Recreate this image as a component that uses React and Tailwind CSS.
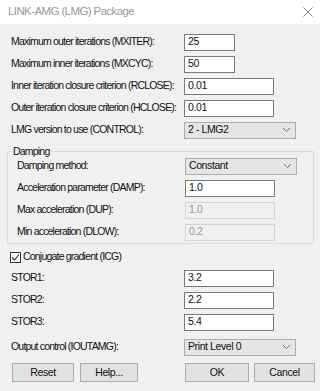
import { useState } from 'react';

const font = { fontFamily: '"Liberation Sans", Arial, sans-serif' };

function Chevron() {
  return (
    <svg width="9" height="6" viewBox="0 0 9 6" className="ml-auto mr-[4px]">
      <path d="M1 1 L4.5 4.5 L8 1" fill="none" stroke="#707070" strokeWidth="1" />
    </svg>
  );
}

function TextBox({ value, width = 'w-[90px]', disabled }) {
  return (
    <div
      className={`h-[17px] ${width} border flex items-center pl-[3px] text-[10.5px] tracking-[-0.4px] ${
        disabled ? 'bg-[#f0f0f0] border-[#d4d4d4] text-[#9a9a9a]' : 'bg-white border-[#7a7a7a] text-[#111]'
      }`}
    >
      {value}
    </div>
  );
}

function Select({ value }) {
  return (
    <div className="h-[17px] w-[112px] bg-[#e5e5e5] border border-[#acacac] flex items-center pl-[3px] text-[10.5px] tracking-[-0.4px] text-[#111]">
      {value}
      <Chevron />
    </div>
  );
}

function Row({ label, children, indent = 'pl-[11px]', h = 'h-[22px]' }) {
  return (
    <div className={`flex items-center ${h}`}>
      <div className={`w-[184px] ${indent} text-[10.5px] tracking-[-0.8px] text-[#111] whitespace-nowrap`}>{label}</div>
      {children}
    </div>
  );
}

function Button({ children, width = 'w-[62px]' }) {
  return (
    <div className={`h-[19px] ${width} bg-[#e1e1e1] border border-[#adadad] flex items-center justify-center text-[10.5px] tracking-[-0.4px] text-[#111]`}>
      {children}
    </div>
  );
}

export default function App() {
  const [icg] = useState(true);

  return (
    <div className="w-[320px] h-[391px] bg-[#f0f0f0] flex flex-col overflow-hidden" style={font}>
      <div className="h-[24px] bg-white flex items-center pl-[8px] pr-[4px] shrink-0">
        <span className="text-[11.5px] tracking-[-0.6px] text-[#999]">LINK-AMG (LMG) Package</span>
        <svg width="10" height="10" viewBox="0 0 10 10" className="ml-auto mr-[3px]">
          <path d="M0.5 0.5 L9.5 9.5 M9.5 0.5 L0.5 9.5" stroke="#8a8a8a" strokeWidth="1" />
        </svg>
      </div>

      <div className="flex flex-col pt-[7px]">
        <Row label="Maximum outer iterations (MXITER):">
          <TextBox value="25" width="w-[51px]" />
        </Row>
        <Row label="Maximum inner iterations (MXCYC):">
          <TextBox value="50" width="w-[51px]" />
        </Row>
        <Row label="Inner iteration closure criterion (RCLOSE):">
          <TextBox value="0.01" />
        </Row>
        <Row label="Outer iteration closure criterion (HCLOSE):">
          <TextBox value="0.01" />
        </Row>
        <Row label="LMG version to use (CONTROL):">
          <Select value="2 - LMG2" />
        </Row>

        <div className="relative mt-[10px] ml-[7px] w-[307px] border border-[#dcdcdc] pt-[3px]">
          <span className="absolute -top-[8px] left-[3px] bg-[#f0f0f0] px-[2px] text-[10.5px] tracking-[-0.8px] text-[#111]">Damping</span>
          <Row label="Damping method:" indent="pl-[9px]">
            <div className="-ml-[7px]">
              <Select value="Constant" />
            </div>
          </Row>
          <Row label="Acceleration parameter (DAMP):" indent="pl-[9px]">
            <div className="-ml-[7px]">
              <TextBox value="1.0" />
            </div>
          </Row>
          <Row label="Max acceleration (DUP):" indent="pl-[9px]">
            <div className="-ml-[7px]">
              <TextBox value="1.0" disabled />
            </div>
          </Row>
          <Row label="Min acceleration (DLOW):" indent="pl-[9px]">
            <div className="-ml-[7px]">
              <TextBox value="0.2" disabled />
            </div>
          </Row>
        </div>

        <div className="flex items-center h-[20px] mt-[3px] pl-[10px]">
          <div className="w-[11px] h-[11px] border border-[#333] bg-white flex items-center justify-center">
            {icg && (
              <svg width="9" height="9" viewBox="0 0 9 9">
                <path d="M1 4.5 L3.5 7 L8 1.5" fill="none" stroke="#222" strokeWidth="1.1" />
              </svg>
            )}
          </div>
          <span className="ml-[2px] text-[10.5px] tracking-[-0.8px] text-[#111]">Conjugate gradient (ICG)</span>
        </div>
        <Row label="STOR1:">
          <TextBox value="3.2" />
        </Row>
        <Row label="STOR2:">
          <TextBox value="2.2" />
        </Row>
        <Row label="STOR3:">
          <TextBox value="5.4" />
        </Row>
        <div className="mt-[3px]">
          <Row label="Output control (IOUTAMG):">
            <Select value="Print Level 0" />
          </Row>
        </div>

        <div className="flex items-center mt-[5px] pl-[12px]">
          <Button>Reset</Button>
          <div className="ml-[6px]">
            <Button width="w-[58px]">Help...</Button>
          </div>
          <div className="ml-[47px]">
            <Button width="w-[64px]">OK</Button>
          </div>
          <div className="ml-[5px]">
            <Button width="w-[61px]">Cancel</Button>
          </div>
        </div>
      </div>
    </div>
  );
}
